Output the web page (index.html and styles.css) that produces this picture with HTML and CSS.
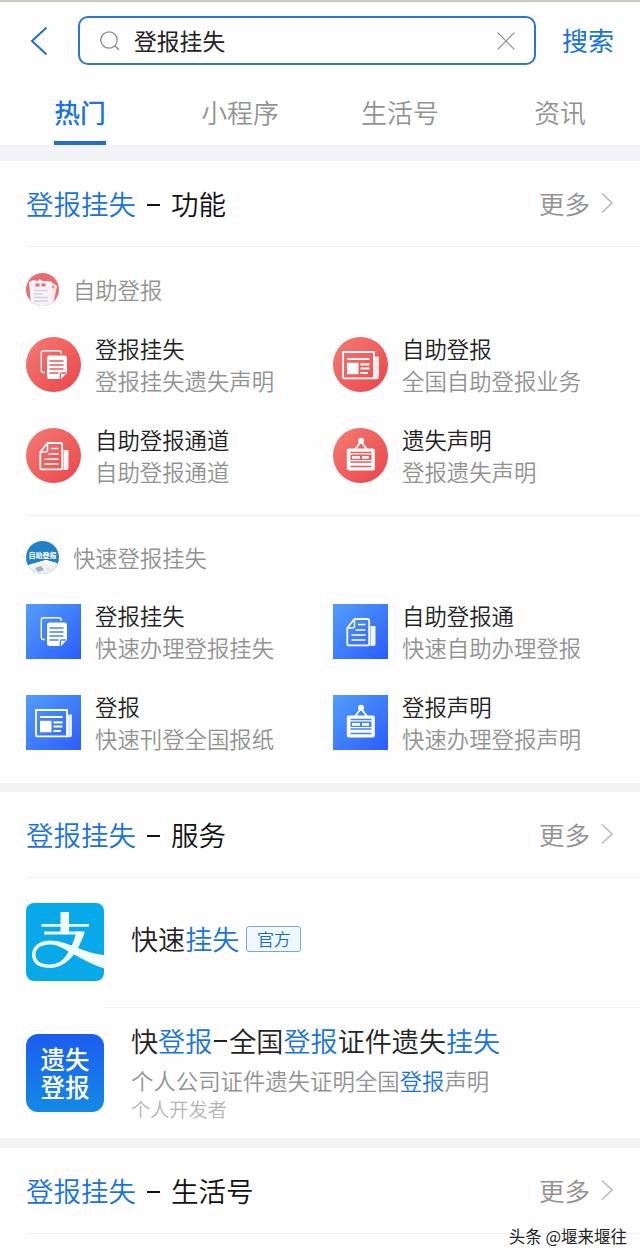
FILE: index.html
```html
<!doctype html>
<html lang="zh-CN">
  <head>
    <meta charset="UTF-8" />
    <meta name="viewport" content="width=device-width, initial-scale=1.0"/>
    <title>登报挂失 - 搜索</title>
    <link rel="stylesheet" href="styles.css">
  </head>
  <body>
    <!-- shared icons -->
    <svg class="sprite" width="0" height="0">
      <symbol id="copy" viewBox="0 0 55 55">
        <path d="M19 35.500h-1.500q-2.200 0-2.200-2.200V16q0-2.200 2.200-2.200h15.500q2.200 0 2.200 2.200v1" fill="none" stroke="#fff" stroke-width="1.400"/>
        <path d="M23 18.500h15.500q2.500 0 2.500 2.500V36l-6 6H23.500q-2.500 0-2.500-2.500V21q0-2.500 2-2.500z" fill="#fff"/>
        <path d="M23.500 24h14M23.500 28h14M23.500 32h14M23.500 36h9M34.300 42v-4.500q0-1.500 1.500-1.500H40" fill="none" stroke="currentColor" stroke-width="1.300"/>
      </symbol>
      <symbol id="news" viewBox="0 0 55 55">
        <path d="M10 15h31v26.300H11q-1 0-1-1z" fill="none" stroke="#fff" stroke-width="1.800"/>
        <path d="M41 19.500h5V40q0 2.200-2.200 2.200H41z" fill="#fff" fill-opacity=".85"/>
        <path d="M14 22h22.500M27.500 27.300h9M27.500 31.500h9M27.500 36h7.500" stroke="#fff" stroke-width="2.200"/>
        <path d="M14 25.800h11.500v11.500H14z" fill="#fff"/>
      </symbol>
      <symbol id="doc" viewBox="0 0 55 55">
        <path d="M21.500 15h13q1.700 0 1.700 1.700v23q0 1.700-1.700 1.700H16q-1.700 0-1.700-1.700V24z" fill="none" stroke="#fff" stroke-width="1.800"/>
        <path d="M21.500 15v7q0 2-2 2h-5" fill="none" stroke="#fff" stroke-width="1.500"/>
        <path d="M25 20.500h7.500M22.500 26h10M18.500 31h14M18.500 36h14" stroke="#fff" stroke-width="1.400"/>
        <path d="M37.500 22h5v17.500q0 2.500-2.500 2.500h-2.500z" fill="#fff" fill-opacity=".95"/>
      </symbol>
      <symbol id="board" viewBox="0 0 55 55">
        <path d="M22 21.500l6-8 6 8" fill="none" stroke="#fff" stroke-width="1.800"/>
        <circle cx="28" cy="12.800" r="3" fill="#fff"/>
        <rect x="13.800" y="20.500" width="28" height="22" rx="2" fill="#fff"/>
        <path d="M17.500 24.500h21M17.500 34h21M17.500 38.500h21" stroke="currentColor" stroke-width="1.700"/>
        <path d="M17.500 26.500h21v5.500h-21z" fill="currentColor"/>
        <path d="M19 28h8v2.800h-8zM29 28h7v2.800h-7z" fill="#fff"/>
      </symbol>
      <symbol id="arrow" viewBox="0 0 12 22">
        <path d="M1 1.500l10 9.500-10 9.500" fill="none" stroke="currentColor" stroke-width="1.700"/>
      </symbol>
    </svg>

    <header class="search-bar">
      <svg class="back" viewBox="0 0 18 30"><path d="M16.500 1.500L2 15l14.500 13.500" fill="none" stroke="#1d70d0" stroke-width="2"/></svg>
      <div class="search-box">
        <svg class="glass" viewBox="0 0 20 20"><circle cx="9" cy="9" r="8.200" fill="none" stroke="#8b8b8b" stroke-width="1.300"/><path d="M14.800 14.800l4.200 4" stroke="#8b8b8b" stroke-width="1.500"/></svg>
        <span class="keyword">登报挂失</span>
        <svg class="clear" viewBox="0 0 18 18"><path d="M.7.700l16.600 16.600M17.300.700L.7 17.300" stroke="#888" stroke-width="1.200"/></svg>
      </div>
      <span class="search-btn">搜索</span>
    </header>
    <nav class="tabs">
      <span class="tab active">热门</span>
      <span class="tab">小程序</span>
      <span class="tab">生活号</span>
      <span class="tab">资讯</span>
    </nav>

    <section class="section first">
      <div class="section-head">
        <h2><em>登报挂失</em><i></i>功能</h2>
        <a class="more">更多<svg><use href="#arrow"/></svg></a>
      </div>
      <div class="group">
        <div class="group-head">
          <svg class="group-logo" viewBox="0 0 33 33">
            <defs>
              <clipPath id="round"><circle cx="16.500" cy="16.500" r="16.500"/></clipPath>
            </defs>
            <g clip-path="url(#round)">
              <rect width="33" height="33" fill="#e76d70"/>
              <path d="M25 9l6 4-4 20h-5z" fill="#f7e3e5"/>
              <path d="M3 9l4-2 5 1 1.500-2 3 2 9 .5 1 6-1 18.500H5z" fill="#f5f3f7"/>
              <path d="M9.500 12h4M15.500 12h4" stroke="#e76d70" stroke-width="3"/>
              <path d="M8 17.500h14M8 21h9M8 24.500h14M8 28h14" stroke="#d4d2d8" stroke-width="1.300"/>
              <path d="M26 13l2 2" stroke="#e76d70" stroke-width="1.500"/>
            </g>
          </svg>
          <span>自助登报</span>
        </div>
        <div class="grid red">
          <div class="item">
            <svg class="icon"><use href="#copy"/></svg>
            <div><h3>登报挂失</h3><p>登报挂失遗失声明</p></div>
          </div>
          <div class="item">
            <svg class="icon"><use href="#news"/></svg>
            <div><h3>自助登报</h3><p>全国自助登报业务</p></div>
          </div>
          <div class="item">
            <svg class="icon"><use href="#doc"/></svg>
            <div><h3>自助登报通道</h3><p>自助登报通道</p></div>
          </div>
          <div class="item">
            <svg class="icon"><use href="#board"/></svg>
            <div><h3>遗失声明</h3><p>登报遗失声明</p></div>
          </div>
        </div>
      </div>
      <div class="group">
        <div class="group-head">
          <svg class="group-logo" viewBox="0 0 33 33">
            <g clip-path="url(#round)">
              <rect width="33" height="33" fill="#2280c8"/>
              <path d="M0 25l20-6 13 4v10H0z" fill="#edf1f4"/>
              <path d="M2 24l18-5 11 3-4 3-9-3-13 5z" fill="#fff"/>
              <path d="M9 27l6-2 3 4-6 2z" fill="#a9b2bd"/>
              <path d="M19 26l8 2-5 4z" fill="#f1e7dc"/>
            </g>
            <text class="logo-text" x="16.500" y="16.500" text-anchor="middle">自助登报</text>
          </svg>
          <span>快速登报挂失</span>
        </div>
        <div class="grid blue">
          <div class="item">
            <svg class="icon"><use href="#copy"/></svg>
            <div><h3>登报挂失</h3><p>快速办理登报挂失</p></div>
          </div>
          <div class="item">
            <svg class="icon"><use href="#doc"/></svg>
            <div><h3>自助登报通</h3><p>快速自助办理登报</p></div>
          </div>
          <div class="item">
            <svg class="icon"><use href="#news"/></svg>
            <div><h3>登报</h3><p>快速刊登全国报纸</p></div>
          </div>
          <div class="item">
            <svg class="icon"><use href="#board"/></svg>
            <div><h3>登报声明</h3><p>快速办理登报声明</p></div>
          </div>
        </div>
      </div>
    </section>

    <section class="section services">
      <div class="section-head">
        <h2><em>登报挂失</em><i></i>服务</h2>
        <a class="more">更多<svg><use href="#arrow"/></svg></a>
      </div>
      <div class="service">
        <svg class="service-logo alipay" viewBox="0 0 78 78">
          <path d="M34.500 9h8.500v20h-8.500z" fill="#f0faff"/>
          <path d="M15.500 22.300h47.500M18 30h38" stroke="#f0faff" stroke-width="2.800"/>
          <path d="M50.500 28.600H59C56 38 52 46 47 52.500 41 60 33 65 24 65 12 65 6 60 6 51.500 6 43 14 37.500 24 37.500c17 0 31 12 54 14.500v13.500C67 62 57 56.500 47 51c-9-5-15-9.500-23-9.500-8 0-14.500 3.500-14.500 10 0 6.500 5.500 10 13.500 10 9 0 14-4 18.500-11C45 45 48.500 37 50.500 28.600z" fill="#f0faff"/>
        </svg>
        <div class="service-body">
          <h4>快速<em>挂失</em><span class="badge">官方</span></h4>
        </div>
      </div>
      <div class="service second">
        <div class="service-logo lost"><span>遗失</span><span>登报</span></div>
        <div class="service-body">
          <h4>快<em>登报</em><i></i>全国<em>登报</em>证件遗失<em>挂失</em></h4>
          <p>个人公司证件遗失证明全国<em>登报</em>声明</p>
          <small>个人开发者</small>
        </div>
      </div>
    </section>

    <section class="section last">
      <div class="section-head">
        <h2><em>登报挂失</em><i></i>生活号</h2>
        <a class="more">更多<svg><use href="#arrow"/></svg></a>
      </div>
    </section>
    <div class="watermark">头条 @堰来堰往</div>
  </body>
</html>
```

FILE: styles.css
```css
* {
  box-sizing: border-box;
}
body {
  margin: 0;
  width: 640px;
  height: 1260px;
  overflow: hidden;
  background: #fefefe;
  border-top: 2px solid #cdc7c2;
  color: #222;
  font-family: "Noto Sans CJK SC", sans-serif;
}
h2, h3, h4, p {
  margin: 0;
  font-weight: 350;
}
em {
  font-style: normal;
  color: #1a73dc;
}
.sprite {
  position: absolute;
}

/* search */
.search-bar {
  display: flex;
  align-items: center;
  height: 77px;
  padding: 0 20px 0 30px;
}
.back {
  width: 18px;
  height: 30px;
}
.search-box {
  display: flex;
  align-items: center;
  width: 458px;
  height: 49px;
  margin-left: 30px;
  padding: 0 19px 0 20px;
  border: 2px solid #2d76c9;
  border-radius: 10px;
}
.glass {
  width: 20px;
  height: 20px;
}
.keyword {
  flex: 1;
  margin-left: 14px;
  font-size: 22.800px;
  line-height: 30px;
}
.clear {
  width: 18px;
  height: 18px;
}
.search-btn {
  margin-left: 26px;
  padding-bottom: 2px;
  font-size: 26px;
  line-height: 36px;
  white-space: nowrap;
  color: #1a73dc;
}

/* tabs */
.tabs {
  display: grid;
  grid-template-columns: repeat(4, 160px);
  justify-items: center;
  height: 66px;
}
.tab {
  padding-top: 14px;
  height: 66px;
  font-size: 25.800px;
  line-height: 38px;
  font-weight: 350;
  color: #929292;
}
.tab.active {
  font-weight: 500;
  color: #1a73dc;
  border-bottom: 4px solid #2070cf;
}

/* sections */
.section {
  border-top: 10px solid #f3f2f5;
}
.section.first {
  border-top: 16px solid #f3f2f7;
}
.section.services {
  border-top: 9px solid #f3f3f3;
}
.section-head {
  display: flex;
  justify-content: space-between;
  align-items: center;
  height: 86px;
  margin-left: 26px;
  padding: 0 27px 1px 0;
  border-bottom: 1px solid #f2f2f2;
}
.section-head h2 {
  font-size: 27.500px;
  line-height: 40px;
  color: #111;
}
.section-head i {
  display: inline-block;
  width: 13px;
  height: 2px;
  margin: 0 11px 9px;
  background: #111;
}
.more {
  display: flex;
  align-items: center;
  font-size: 25.500px;
  line-height: 38px;
  font-weight: 350;
  color: #929292;
}
.more svg {
  width: 12px;
  height: 22px;
  margin-left: 11px;
  color: #bbb;
}

/* function groups */
.group {
  height: 268px;
  margin-left: 26px;
  padding-top: 26px;
}
.group + .group {
  padding-top: 25px;
  border-top: 1px solid #f2f2f2;
}
.group-head {
  display: flex;
  align-items: center;
  height: 33px;
  font-size: 22.300px;
  line-height: 30px;
  font-weight: 350;
  color: #929292;
}
.group-head span {
  padding-bottom: 2px;
}
.group-logo {
  width: 33px;
  height: 33px;
  margin-right: 14px;
}
.logo-text {
  font-size: 7px;
  font-weight: 700;
  fill: #fff;
}
.grid {
  display: grid;
  grid-template-columns: 307px 307px;
  grid-auto-rows: 55px;
  row-gap: 36px;
  margin-top: 31px;
}
.grid.blue {
  margin-top: 30px;
}
.item {
  display: flex;
  align-items: center;
}
.item div {
  padding-bottom: 1px;
}
.icon {
  width: 55px;
  height: 55px;
  margin-right: 14px;
}
.red .icon {
  border-radius: 50%;
  color: #ec5a5c;
  background: linear-gradient(135deg, #f47b75, #ea4549);
}
.blue .icon {
  color: #4484fa;
  background: linear-gradient(135deg, #539efb, #2b5dfb);
}
.item h3, .item p {
  font-size: 22.400px;
  line-height: 32px;
}
.item p {
  color: #929292;
}

/* services */
.service {
  display: flex;
  height: 130px;
  margin-left: 26px;
  padding-top: 25px;
}
.service-logo {
  width: 78px;
  height: 78px;
  margin-right: 27px;
}
.service-body {
  flex: 1;
}
.alipay {
  border-radius: 8px;
  background: #08a9e9;
}
.service h4 {
  display: flex;
  align-items: center;
  height: 38px;
  font-size: 27.100px;
  line-height: 38px;
}
.service:not(.second) h4 {
  margin-top: 17px;
}
.badge {
  width: 55px;
  height: 26px;
  margin-left: 7px;
  border: 1px solid #7fa9c4;
  border-radius: 3px;
  background: #eff8ff;
  font-size: 17px;
  line-height: 23px;
  text-align: center;
  color: #1a6fc4;
}
.lost {
  display: flex;
  flex-direction: column;
  align-items: center;
  padding-top: 11px;
  border-radius: 12px;
  background: linear-gradient(#1c5cf0, #138ae4);
  color: #fff;
  font-size: 24.500px;
  line-height: 27.500px;
  font-weight: 500;
}
.second {
  position: relative;
  padding-top: 26px;
}
.second::before {
  content: "";
  position: absolute;
  top: -1px;
  left: 78px;
  right: 0;
  height: 1px;
  background: #f2f2f2;
}
.second h4 {
  margin-top: -12px;
}
.second h4 i {
  width: 13px;
  height: 2px;
  margin: 0 2px;
  background: #222;
}
.second p {
  font-size: 22.400px;
  line-height: 32px;
  margin-top: 4px;
  color: #929292;
}
.second small {
  display: block;
  font-size: 19.200px;
  line-height: 26px;
  font-weight: 350;
  color: #b5b5b5;
}

.watermark {
  position: absolute;
  right: 13px;
  bottom: 12px;
  font-size: 16.500px;
  line-height: 24px;
  color: #222;
  text-shadow: -1px -1px 0 #fff;
}
```
